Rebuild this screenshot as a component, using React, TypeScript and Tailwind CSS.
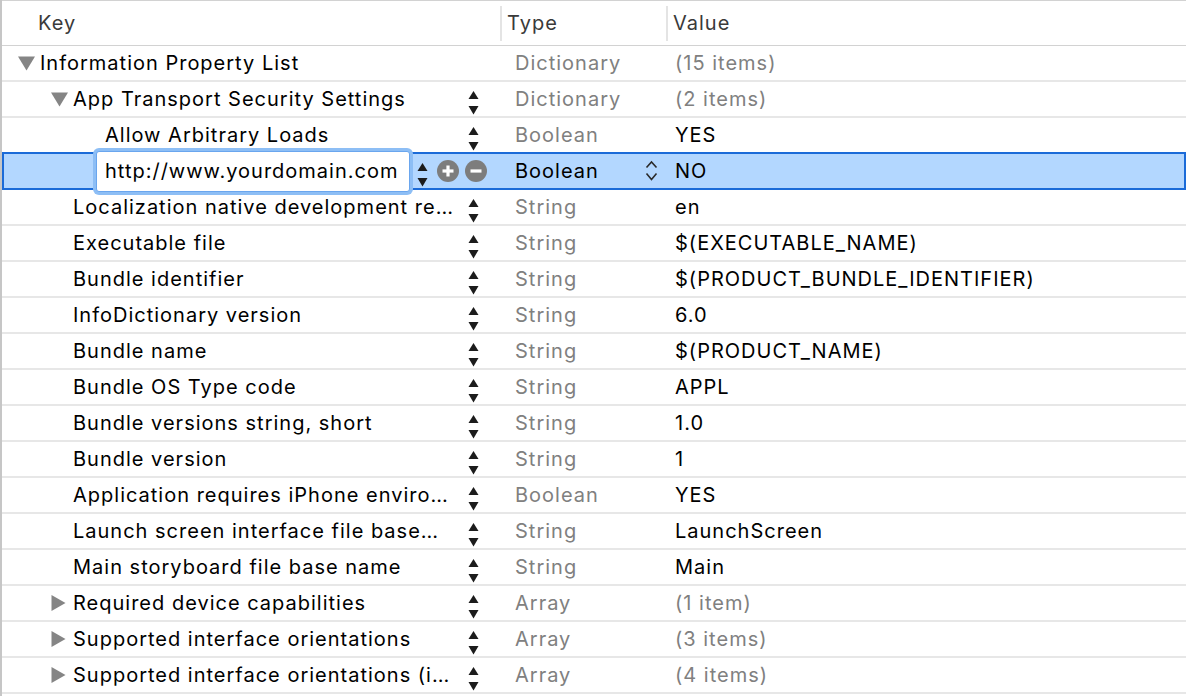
import React from "react";

type Row = {
  level: number;
  key: string;
  type: string;
  value: string;
  disclosure?: "open" | "closed";
  stepper?: boolean;
  typeMuted?: boolean;
  valueMuted?: boolean;
  selected?: boolean;
};

const ROWS: Row[] = [
  { level: 0, key: "Information Property List", disclosure: "open", type: "Dictionary", value: "(15 items)", typeMuted: true, valueMuted: true },
  { level: 1, key: "App Transport Security Settings", disclosure: "open", stepper: true, type: "Dictionary", value: "(2 items)", typeMuted: true, valueMuted: true },
  { level: 2, key: "Allow Arbitrary Loads", stepper: true, type: "Boolean", value: "YES", typeMuted: true },
  { level: 2, key: "http://www.yourdomain.com", type: "Boolean", value: "NO", selected: true },
  { level: 1, key: "Localization native development re…", stepper: true, type: "String", value: "en", typeMuted: true },
  { level: 1, key: "Executable file", stepper: true, type: "String", value: "$(EXECUTABLE_NAME)", typeMuted: true },
  { level: 1, key: "Bundle identifier", stepper: true, type: "String", value: "$(PRODUCT_BUNDLE_IDENTIFIER)", typeMuted: true },
  { level: 1, key: "InfoDictionary version", stepper: true, type: "String", value: "6.0", typeMuted: true },
  { level: 1, key: "Bundle name", stepper: true, type: "String", value: "$(PRODUCT_NAME)", typeMuted: true },
  { level: 1, key: "Bundle OS Type code", stepper: true, type: "String", value: "APPL", typeMuted: true },
  { level: 1, key: "Bundle versions string, short", stepper: true, type: "String", value: "1.0", typeMuted: true },
  { level: 1, key: "Bundle version", stepper: true, type: "String", value: "1", typeMuted: true },
  { level: 1, key: "Application requires iPhone enviro…", stepper: true, type: "Boolean", value: "YES", typeMuted: true },
  { level: 1, key: "Launch screen interface file base…", stepper: true, type: "String", value: "LaunchScreen", typeMuted: true },
  { level: 1, key: "Main storyboard file base name", stepper: true, type: "String", value: "Main", typeMuted: true },
  { level: 1, key: "Required device capabilities", disclosure: "closed", stepper: true, type: "Array", value: "(1 item)", typeMuted: true, valueMuted: true },
  { level: 1, key: "Supported interface orientations", disclosure: "closed", stepper: true, type: "Array", value: "(3 items)", typeMuted: true, valueMuted: true },
  { level: 1, key: "Supported interface orientations (i…", disclosure: "closed", stepper: true, type: "Array", value: "(4 items)", typeMuted: true, valueMuted: true },
];

const INDENT = ["pl-[16px]", "pl-[49px]", "pl-[81px]"];

function Disclosure({ kind }: { kind: "open" | "closed" }) {
  return (
    <div className="w-[22px] shrink-0 flex items-center">
      {kind === "open" ? (
        <svg width="17" height="15" viewBox="0 0 17 15">
          <path d="M0 0.5 L17 0.5 L8.5 14.5 Z" fill="#858585" />
        </svg>
      ) : (
        <svg width="15" height="16" viewBox="0 0 15 16">
          <path d="M0.5 0 L14.5 8 L0.5 16 Z" fill="#858585" />
        </svg>
      )}
    </div>
  );
}

function Stepper() {
  return (
    <svg width="12" height="34" viewBox="0 0 12 34" className="shrink-0">
      <path d="M0.5 17 L5.5 9 L10.5 17 Z" fill="#1c1c1c" />
      <path d="M0.5 24 L10.5 24 L5.5 32.5 Z" fill="#1c1c1c" />
    </svg>
  );
}

function RoundButton({ minus }: { minus?: boolean }) {
  return (
    <svg width="22" height="22" viewBox="0 0 22 22" className="shrink-0">
      <circle cx="11" cy="11" r="11" fill="#7d7d7d" />
      <path d="M5.5 11 H16.5" stroke="#fff" strokeWidth="3.2" />
      {!minus && <path d="M11 5.5 V16.5" stroke="#fff" strokeWidth="3.2" />}
    </svg>
  );
}

function PopupArrows() {
  return (
    <svg width="13" height="22" viewBox="0 0 13 22" className="shrink-0">
      <path d="M1.5 7.5 L6.5 2 L11.5 7.5" fill="none" stroke="#2a2a2a" strokeWidth="1.6" />
      <path d="M1.5 13.5 L6.5 19.5 L11.5 13.5" fill="none" stroke="#2a2a2a" strokeWidth="1.6" />
    </svg>
  );
}

function PlistRow({ row }: { row: Row }) {
  if (row.selected) {
    return (
      <div className="-mt-[2px] h-[38px] flex items-center bg-[#b3d7ff] border-2 border-[#1b6bd8]">
        <div className="w-[496px] shrink-0 flex items-center pl-[89px]">
          <div className="h-[47px] w-[320px] rounded-[6px] bg-[#8dbef5] p-[3px] shrink-0">
            <div className="h-full w-full rounded-[3px] bg-white border border-[#6aa6ee] flex items-center pl-[8px] text-black">
              {row.key}
            </div>
          </div>
          <div className="ml-[4px]">
            <Stepper />
          </div>
          <div className="ml-[8px] flex items-center gap-[6px]">
            <RoundButton />
            <RoundButton minus />
          </div>
        </div>
        <div className="w-[166px] shrink-0 flex items-center pl-[15px] pr-[8px] text-black">
          <span className="flex-1">{row.type}</span>
          <PopupArrows />
        </div>
        <div className="flex-1 pl-[9px] text-black">{row.value}</div>
      </div>
    );
  }
  return (
    <div className="h-[36px] flex items-center border-b-2 border-[#e7e7e7]">
      <div className={`w-[498px] shrink-0 flex items-center h-full ${INDENT[row.level]}`}>
        {row.disclosure ? <Disclosure kind={row.disclosure} /> : <div className="w-[22px] shrink-0" />}
        <span className="flex-1 min-w-0 whitespace-nowrap text-black">{row.key}</span>
        {row.stepper && (
          <div className="mr-[20px] self-start">
            <Stepper />
          </div>
        )}
      </div>
      <div className={`w-[166px] shrink-0 pl-[15px] ${row.typeMuted ? "text-[#808080]" : "text-black"}`}>{row.type}</div>
      <div className={`flex-1 pl-[9px] whitespace-nowrap ${row.valueMuted ? "text-[#808080]" : "text-black"}`}>{row.value}</div>
    </div>
  );
}

export default function App() {
  return (
    <div
      className="w-[1186px] h-[696px] overflow-hidden bg-white border-l-2 border-[#c6c6c6] text-[20px] leading-normal tracking-[1px]"
      style={{ fontFamily: "Inter, 'Helvetica Neue', Arial, sans-serif" }}
    >
      <div className="h-[46px] border-t border-b border-[#d2d2d2] flex items-center text-[#3a3a3a]">
        <div className="w-[498px] shrink-0 pl-[36px]">Key</div>
        <div className="w-[166px] shrink-0 h-full flex items-center">
          <div className="w-[2px] h-[35px] bg-[#e4e4e4]" />
          <span className="pl-[5px]">Type</span>
        </div>
        <div className="flex-1 h-full flex items-center">
          <div className="w-[2px] h-[35px] bg-[#e4e4e4]" />
          <span className="pl-[5px]">Value</span>
        </div>
      </div>
      {ROWS.map((row, i) => (
        <PlistRow key={i} row={row} />
      ))}
    </div>
  );
}
